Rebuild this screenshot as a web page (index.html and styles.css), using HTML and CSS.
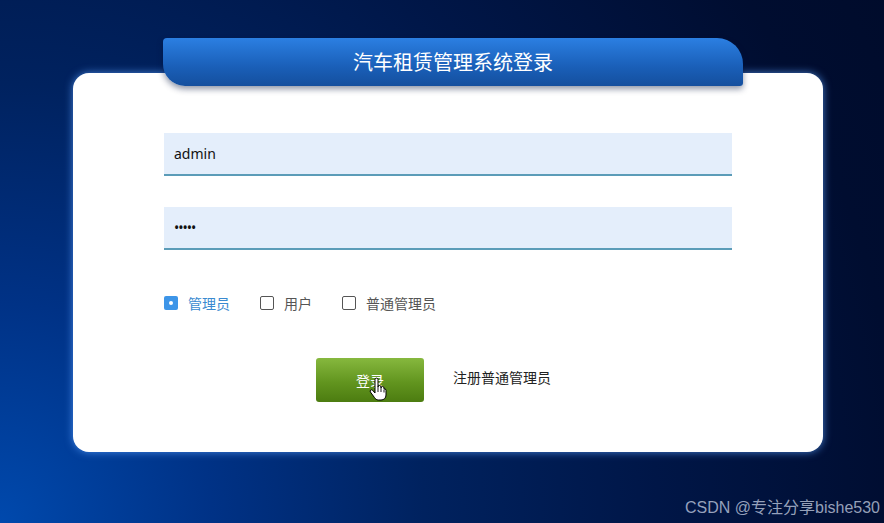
FILE: index.html
```html
<!DOCTYPE html>
<html lang="zh-CN">
<head>
  <meta charset="UTF-8" />
  <meta name="viewport" content="width=device-width, initial-scale=1.0" />
  <title>汽车租赁管理系统登录</title>
  <link rel="stylesheet" href="styles.css">
</head>
<body>
  <div class="page">
    <div class="login-tab">汽车租赁管理系统登录</div>
    <div class="login-card">
      <input class="field" type="text" value="admin" />
      <input class="field field-pwd" type="password" value="12345" />

      <div class="roles">
        <label class="role checked"><span class="box"></span>管理员</label>
        <label class="role"><span class="box"></span>用户</label>
        <label class="role"><span class="box"></span>普通管理员</label>
      </div>

      <div class="actions">
        <button class="btn-login">登录
          <svg class="cursor" viewBox="0 0 18 24" width="18" height="24">
            <path d="M6 12V2.6a1.5 1.5 0 0 1 3 0V10a1.5 1.5 0 0 1 3 0v1a1.5 1.5 0 0 1 3 0v1a1.5 1.5 0 0 1 2 1.4V18c0 3-2 5-5 5H9.5c-2 0-3-1-4-2.4L1.4 15a1.4 1.4 0 0 1 2.3-1.6L6 16Z" fill="#fff" stroke="#000" stroke-width="1"/>
            <path d="M9 10v5M12 11v4M15 12.5v3" stroke="#000" stroke-width="0.9" fill="none"/>
          </svg>
        </button>
        <a class="register" href="#">注册普通管理员</a>
      </div>
    </div>
  </div>
  <div class="watermark">CSDN @专注分享bishe530</div>
</body>
</html>
```

FILE: styles.css
```css
* {
  box-sizing: border-box;
}

html, body {
  height: 100%;
}

body {
  margin: 0;
  overflow: hidden;
  font-family: 'Noto Sans', 'Noto Sans CJK SC', sans-serif;
  background: radial-gradient(ellipse 120% 210% at 0% 100%, #0049ad 0%, #003286 20%, #00225f 40%, #001647 62%, #000d30 85%, #000b2a 100%);
  position: relative;
}

.page {
  padding: 38px 0 0 73px;
}

.login-tab {
  position: relative;
  z-index: 1;
  width: 580px;
  height: 48px;
  margin: 0 0 -13px 90px;
  background: linear-gradient(to bottom, #2b7fe2, #1a5fb8 60%, #144f9e);
  border-radius: 4px 26px 3px 22px;
  box-shadow: 0 3px 6px rgba(0, 20, 60, 0.45);
  color: #fff;
  font-family: 'Noto Sans CJK SC', sans-serif;
  font-size: 20px;
  line-height: 48px;
  text-align: center;
}

.login-card {
  width: 750px;
  height: 379px;
  padding: 60px 0 0 91px;
  background: #fff;
  border-radius: 16px;
  box-shadow: 0 0 8px rgba(90, 160, 255, 0.75);
}

.field {
  display: block;
  width: 568px;
  height: 43px;
  padding: 0 10px;
  border: none;
  border-bottom: 2px solid #5b9cb8;
  background: #e4eefb;
  font-family: 'Noto Sans', sans-serif;
  font-size: 14px;
  color: #111;
  outline: none;
}

.field-pwd {
  margin-top: 31px;
  font-size: 14px;
  letter-spacing: -1px;
}

.roles {
  display: flex;
  align-items: center;
  height: 20px;
  margin-top: 43px;
}

.role {
  display: flex;
  align-items: center;
  margin-right: 30px;
  font-size: 14px;
  color: #555;
}

.role .box {
  width: 14px;
  height: 14px;
  margin-right: 10px;
  border: 1px solid #555;
  border-radius: 2px;
  background: #fff;
}

.role.checked {
  color: #3a8ad0;
}

.role.checked .box {
  display: flex;
  align-items: center;
  justify-content: center;
  border: none;
  background: #3d95e8;
}

.role.checked .box::after {
  content: "";
  width: 4px;
  height: 4px;
  border-radius: 50%;
  background: #fff;
}

.actions {
  display: flex;
  align-items: center;
  margin-top: 45px;
}

.btn-login {
  position: relative;
  width: 108px;
  height: 44px;
  margin-left: 152px;
  border: none;
  border-radius: 3px;
  background: linear-gradient(to bottom, #86b83e, #62951f 55%, #4c7c10);
  color: #fff;
  font-family: 'Noto Sans CJK SC', sans-serif;
  font-size: 14px;
  cursor: pointer;
}

.cursor {
  position: absolute;
  left: 53px;
  top: 19px;
}

.register {
  margin: 0 0 6px 29px;
  font-size: 14px;
  color: #222;
  text-decoration: none;
}

.watermark {
  position: absolute;
  right: 4px;
  bottom: 5px;
  font-family: 'Liberation Sans', 'Noto Sans CJK SC', sans-serif;
  font-size: 16px;
  color: rgba(200, 210, 228, 0.75);
}
```
